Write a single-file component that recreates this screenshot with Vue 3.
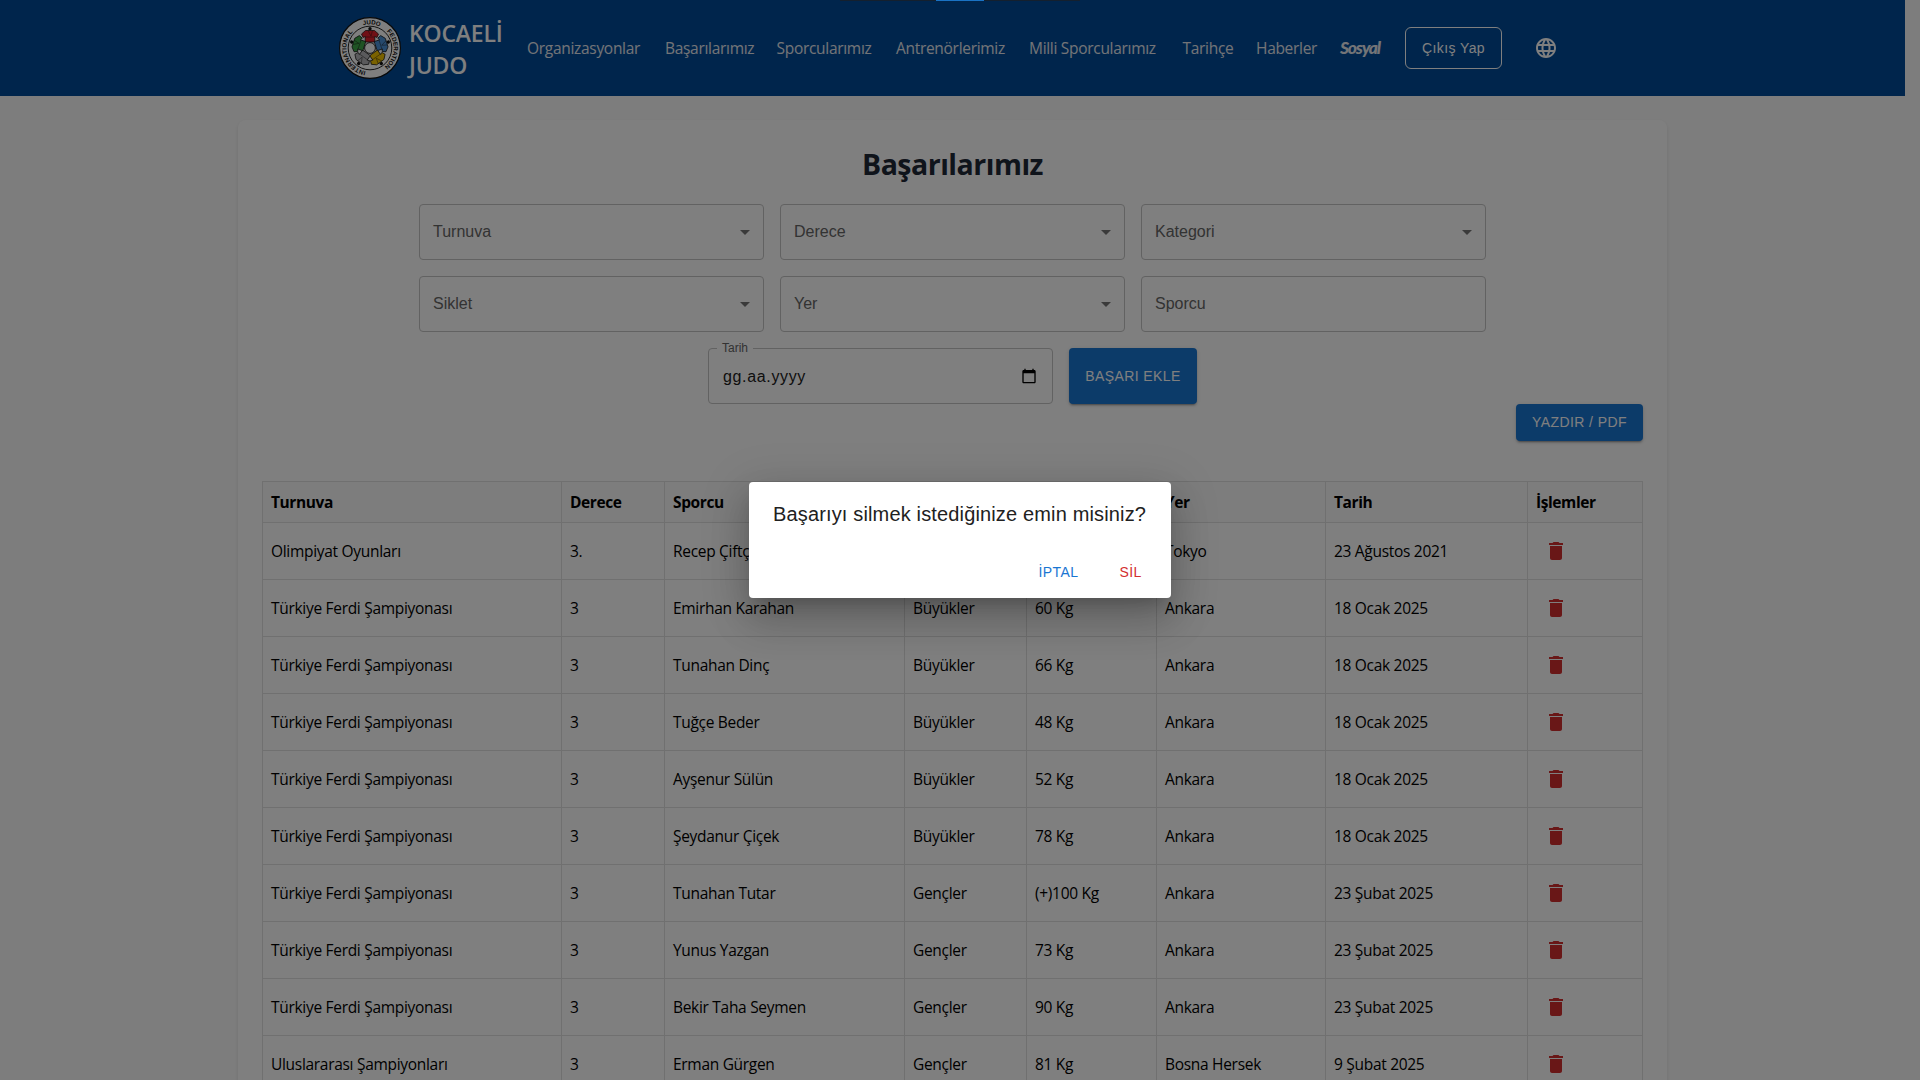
<script setup>
const nav = [
  { label: 'Organizasyonlar', w: 114 }, { label: 'Başarılarımız', w: 87.5 }, { label: 'Sporcularımız', w: 95.5 },
  { label: 'Antrenörlerimiz', w: 109 }, { label: 'Milli Sporcularımız', w: 129.5 }, { label: 'Tarihçe', w: 49.5 }, { label: 'Haberler', w: 60 },
]
const filters = ['Turnuva', 'Derece', 'Kategori', 'Siklet', 'Yer', 'Sporcu']
const heads = ['Turnuva', 'Derece', 'Sporcu', 'Kategori', 'Siklet', 'Yer', 'Tarih', 'İşlemler']
const cols = [299, 103, 240, 122, 130, 169, 202, 115]
const t = 'Türkiye Ferdi Şampiyonası'
const rows = [
  ['Olimpiyat Oyunları', '3.', 'Recep Çiftçi', 'Büyükler', '60 Kg', 'Tokyo', '23 Ağustos 2021'],
  [t, '3', 'Emirhan Karahan', 'Büyükler', '60 Kg', 'Ankara', '18 Ocak 2025'],
  [t, '3', 'Tunahan Dinç', 'Büyükler', '66 Kg', 'Ankara', '18 Ocak 2025'],
  [t, '3', 'Tuğçe Beder', 'Büyükler', '48 Kg', 'Ankara', '18 Ocak 2025'],
  [t, '3', 'Ayşenur Sülün', 'Büyükler', '52 Kg', 'Ankara', '18 Ocak 2025'],
  [t, '3', 'Şeydanur Çiçek', 'Büyükler', '78 Kg', 'Ankara', '18 Ocak 2025'],
  [t, '3', 'Tunahan Tutar', 'Gençler', '(+)100 Kg', 'Ankara', '23 Şubat 2025'],
  [t, '3', 'Yunus Yazgan', 'Gençler', '73 Kg', 'Ankara', '23 Şubat 2025'],
  [t, '3', 'Bekir Taha Seymen', 'Gençler', '90 Kg', 'Ankara', '23 Şubat 2025'],
  ['Uluslararası Şampiyonları', '3', 'Erman Gürgen', 'Gençler', '81 Kg', 'Bosna Hersek', '9 Şubat 2025'],
]
const judogis = [
  { a: 0, c: '#e0202c' }, { a: 72, c: '#4d93d9' }, { a: 144, c: '#f5c400' }, { a: 216, c: '#b4b4b8' }, { a: 288, c: '#3fa648' },
]
</script>

<template>
  <div class="page">
    <header class="bar">
      <div class="brand">
        <svg class="logo" width="62" height="62" viewBox="0 0 62 62">
          <defs>
            <path id="ringTop" d="M31 31 m-23.6 0 a23.6 23.6 0 1 1 47.2 0 a23.6 23.6 0 1 1 -47.2 0" />
          </defs>
          <circle cx="31" cy="31" r="30.4" fill="#fff" stroke="#111" stroke-width="1.2" />
          <circle cx="31" cy="31" r="21.8" fill="#fff" stroke="#111" stroke-width=".9" />
          <g class="ring">
            <text transform="rotate(4 31 31)"><textPath href="#ringTop" startOffset="25%" text-anchor="middle">JUDO</textPath></text>
            <text transform="rotate(94 31 31)"><textPath href="#ringTop" startOffset="25%" text-anchor="middle">FEDERATION</textPath></text>
            <text transform="rotate(-108 31 31)"><textPath href="#ringTop" startOffset="25%" text-anchor="middle">INTERNATIONAL</textPath></text>
          </g>
          <g v-for="j in judogis" :key="j.a" :transform="`rotate(${j.a} 31 31)`">
            <circle cx="31" cy="11.8" r="1.7" fill="#111" />
            <path d="M26.500 13.500 L35.500 13.500 L39.500 17 L38 20.500 L35.800 19.500 L35.800 25 L26.200 25 L26.200 19.500 L24 20.500 L22.500 17 Z" :fill="j.c" stroke="#111" stroke-width=".7" />
            <path d="M29 13.500 L32 19 L33.500 13.500 M26.200 20 H35.800" fill="none" stroke="#111" stroke-width=".4" />
          </g>
          <circle cx="31" cy="31" r="5.4" fill="#fff" stroke="#111" stroke-width=".9" />
        </svg>
        <div class="name"><div>KOCAELİ</div><div>JUDO</div></div>
      </div>
      <nav class="links">
        <a v-for="n in nav" :key="n.label" :style="{ width: n.w + 'px' }">{{ n.label }}</a>
        <a class="social">Sosyal</a>
      </nav>
      <button class="logout">Çıkış Yap</button>
      <svg class="globe" viewBox="0 0 24 24" width="24" height="24"><path fill="#fff" d="M11.99 2C6.47 2 2 6.48 2 12s4.47 10 9.99 10C17.52 22 22 17.52 22 12S17.52 2 11.99 2m6.93 6h-2.95c-.32-1.25-.78-2.45-1.38-3.56 1.84.63 3.37 1.91 4.33 3.56M12 4.04c.83 1.2 1.48 2.53 1.91 3.96h-3.82c.43-1.43 1.08-2.76 1.91-3.96M4.26 14C4.1 13.36 4 12.69 4 12s.1-1.36.26-2h3.38c-.08.66-.14 1.32-.14 2s.06 1.34.14 2zm.82 2h2.95c.32 1.25.78 2.45 1.38 3.56-1.84-.63-3.37-1.9-4.33-3.56m2.95-8H5.08c.96-1.66 2.49-2.93 4.33-3.56C8.81 5.55 8.35 6.75 8.03 8M12 19.96c-.83-1.2-1.48-2.53-1.91-3.96h3.82c-.43 1.43-1.08 2.76-1.91 3.96M14.34 14H9.66c-.09-.66-.16-1.32-.16-2s.07-1.35.16-2h4.68c.09.65.16 1.32.16 2s-.07 1.34-.16 2m.25 5.56c.6-1.11 1.06-2.31 1.38-3.56h2.95c-.96 1.65-2.49 2.93-4.33 3.56M16.36 14c.08-.66.14-1.32.14-2s-.06-1.34-.14-2h3.38c.16.64.26 1.31.26 2s-.1 1.36-.26 2z" /></svg>
    </header>

    <main class="card">
      <h2>Başarılarımız</h2>
      <div class="filters">
        <div v-for="(f, i) in filters" :key="f" class="field">
          <span>{{ f }}</span>
          <svg v-if="i < 5" viewBox="0 0 24 24" width="24" height="24"><path d="m7 10 5 5 5-5z" fill="rgba(0,0,0,.54)" /></svg>
        </div>
        <fieldset class="field date">
          <legend>Tarih</legend>
          <span>gg.aa.yyyy</span>
          <svg viewBox="0 0 24 24" width="16" height="16"><path d="M20 3h-1V1h-2v2H7V1H5v2H4c-1.100 0-2 .9-2 2v16c0 1.100.9 2 2 2h16c1.100 0 2-.9 2-2V5c0-1.100-.9-2-2-2m0 18H4V8h16z" /></svg>
        </fieldset>
        <button class="btn add">BAŞARI EKLE</button>
      </div>
      <div class="print"><button class="btn">YAZDIR / PDF</button></div>
      <table>
        <colgroup><col v-for="(c, i) in cols" :key="i" :style="{ width: c + 'px' }" /></colgroup>
        <thead><tr><th v-for="h in heads" :key="h">{{ h }}</th></tr></thead>
        <tbody>
          <tr v-for="(r, i) in rows" :key="i">
            <td v-for="(c, k) in r" :key="k">{{ c }}</td>
            <td><svg class="trash" viewBox="0 0 24 24" width="24" height="24"><path fill="#d32f2f" d="M6 19c0 1.100.9 2 2 2h8c1.100 0 2-.9 2-2V7H6zM19 4h-3.500l-1-1h-5l-1 1H5v2h14z" /></svg></td>
          </tr>
        </tbody>
      </table>
    </main>

    <div class="overlay">
      <div class="dialog">
        <h3>Başarıyı silmek istediğinize emin misiniz?</h3>
        <div class="actions"><button class="cancel">İPTAL</button><button class="del">SİL</button></div>
      </div>
    </div>
    <div class="handle"><i></i></div>
  </div>
</template>

<style>
body { overflow: hidden; }
</style>
<style scoped>
* { box-sizing: border-box; }
.page { position: relative; width: 1920px; height: 1080px; overflow: hidden; background: #fbfbfb; font-family: "Open Sans", "Noto Sans", sans-serif; color: #000; }
button { font-family: "Liberation Sans", Arial, sans-serif; cursor: pointer; }
.bar { width: 1905px; height: 96px; background: #004a99; display: flex; align-items: center; padding-left: 339px; color: #fff; }
.brand { display: flex; align-items: center; width: 188px; gap: 8px; }
.ring text { font: bold 6.2px "Liberation Sans", sans-serif; fill: #111; }
.name { font-size: 23px; line-height: 32px; font-weight: 600; letter-spacing: -.2px; padding-top: 1px; }
.links { display: flex; gap: 24px; font-size: 15.5px; align-items: center; }
.links a { white-space: nowrap; color: #e6e9ef; letter-spacing: -.3px; }
.links .social { font: italic 900 17.5px/20px "Lato", cursive; width: 42px; letter-spacing: -1.2px; }
.logout { margin-left: 23px; width: 97px; height: 42px; border: 1px solid #fff; border-radius: 6px; background: transparent; color: #fff; font-size: 14px; letter-spacing: .4px; padding: 0; }
.globe { margin-left: 32px; }
.card { width: 1429px; height: 1100px; margin: 24px 0 0 238px; background: #fff; border-radius: 8px; padding: 24px; box-shadow: 0 2px 4px rgba(0,0,0,.1); }
h2 { margin: 0; padding-top: 2px; font-size: 28.500px; line-height: 36px; height: 36px; font-weight: 700; text-align: center; color: #1f2937; letter-spacing: -.5px; }
.filters { display: flex; flex-wrap: wrap; justify-content: center; gap: 16px; width: 1068px; margin: 24px auto 0; }
.field { width: 345px; height: 56px; margin: 0; border: 1px solid #c4c4c4; border-radius: 4px; display: flex; align-items: center; justify-content: space-between; padding: 0 6px 0 13px; font: 16px "Liberation Sans", Arial, sans-serif; color: #666; }
.date { position: relative; color: #212121; padding-right: 15px; }
.date span { letter-spacing: .65px; padding: 2px 0 0 1px; }
.date legend { position: absolute; left: 8px; top: -8px; padding: 0 5px; font-size: 12px; line-height: 14px; background: #fff; color: #666; }
.btn { border: 0; border-radius: 4px; background: #1976d2; color: #fff; width: 127px; height: 37px; font-size: 14px; letter-spacing: .4px; padding: 0 0 1px; box-shadow: 0 3px 1px -2px rgba(0,0,0,.2), 0 2px 2px rgba(0,0,0,.14), 0 1px 5px rgba(0,0,0,.12); }
.btn.add { width: 128px; height: 56px; padding: 0; }
.print { display: flex; justify-content: flex-end; }
table { border-collapse: collapse; table-layout: fixed; width: 1381px; margin-top: 40px; }
th, td { border: 1px solid #e0e0e0; padding: 0 8px; text-align: left; font-size: 15.5px; letter-spacing: -.3px; white-space: nowrap; height: 57px; }
th { height: 41px; background: #fafafa; font-weight: 700; letter-spacing: -.4px; }
.trash { display: block; margin-left: 8px; }
.overlay { position: absolute; inset: 0; background: rgba(0,0,0,.5); display: flex; align-items: center; justify-content: center; }
.dialog { width: 422px; height: 116px; background: #fff; border-radius: 4px; box-shadow: 0 11px 15px -7px rgba(0,0,0,.2), 0 24px 38px 3px rgba(0,0,0,.14), 0 9px 46px 8px rgba(0,0,0,.12); font-family: "Liberation Sans", Arial, sans-serif; }
h3 { margin: 0; padding: 16px 24px; font-size: 20px; line-height: 32px; font-weight: 400; letter-spacing: .15px; color: #212121; white-space: nowrap; }
.actions { display: flex; justify-content: flex-end; gap: 8px; padding: 8px; }
.actions button { width: 64px; height: 36px; border: 0; background: none; font-size: 14px; letter-spacing: .4px; padding: 0 1px 0 0; color: #1976d2; }
.actions .del { color: #d32f2f; }
.handle { position: absolute; left: 840px; top: 0; width: 240px; height: 1px; background: #14202e; display: flex; justify-content: center; }
.handle i { width: 48px; background: #1a73c4; }
</style>
